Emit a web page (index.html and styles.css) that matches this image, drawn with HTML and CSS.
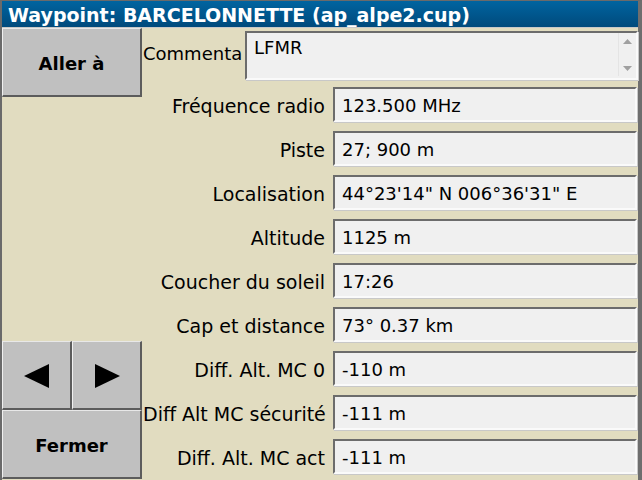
FILE: index.html
```html
<!DOCTYPE html>
<html>
<head>
<meta charset="utf-8">
<link rel="stylesheet" href="styles.css">
</head>
<body>
<div class="window">
  <div class="titlebar">Waypoint: BARCELONNETTE (ap_alpe2.cup)</div>
  <div class="content">
    <div class="left">
      <div class="btn">Aller à</div>
      <div class="bottom-btns">
        <div class="arrows">
          <div class="btn arrow"><svg width="28" height="26" viewBox="0 0 28 26"><polygon points="1,13 26,1 26,25" fill="#000"/></svg></div>
          <div class="btn arrow"><svg width="28" height="26" viewBox="0 0 28 26"><polygon points="2,1 27,13 2,25" fill="#000"/></svg></div>
        </div>
        <div class="btn">Fermer</div>
      </div>
    </div>
    <div class="form">
      <div class="comment-row">
        <div class="clabel">Commenta</div>
        <div class="field memo">
          <span class="memo-text">LFMR</span>
          <div class="scroll">
            <svg width="9" height="5" viewBox="0 0 9 5"><polygon points="4.5,0 9,5 0,5" fill="#a0a0a0"/></svg>
            <svg width="9" height="5" viewBox="0 0 9 5"><polygon points="0,0 9,0 4.5,5" fill="#a0a0a0"/></svg>
          </div>
        </div>
      </div>
      <div class="row"><div class="label">Fréquence radio</div><div class="field">123.500 MHz</div></div>
      <div class="row"><div class="label">Piste</div><div class="field">27; 900 m</div></div>
      <div class="row"><div class="label">Localisation</div><div class="field">44°23'14" N 006°36'31" E</div></div>
      <div class="row"><div class="label">Altitude</div><div class="field">1125 m</div></div>
      <div class="row"><div class="label">Coucher du soleil</div><div class="field">17:26</div></div>
      <div class="row"><div class="label">Cap et distance</div><div class="field">73° 0.37 km</div></div>
      <div class="row"><div class="label">Diff. Alt. MC 0</div><div class="field">-110 m</div></div>
      <div class="row"><div class="label">Diff Alt MC sécurité</div><div class="field">-111 m</div></div>
      <div class="row"><div class="label">Diff. Alt. MC act</div><div class="field">-111 m</div></div>
    </div>
  </div>
</div>
</body>
</html>
```
FILE: styles.css
```css
html, body {
  margin: 0;
  padding: 0;
}
body {
  width: 642px;
  height: 480px;
  overflow: hidden;
  font-family: "DejaVu Sans", sans-serif;
}
.window {
  box-sizing: border-box;
  width: 642px;
  height: 480px;
  border-top: 1px solid #6a6a6a;
  border-left: 2px solid #6a6a6a;
  border-right: 4px solid #6e6e6e;
  background: #e1dcc0;
  display: flex;
  flex-direction: column;
}
.titlebar {
  height: 27px;
  box-sizing: border-box;
  background: linear-gradient(#0064a0, #004a7c);
  color: #fff;
  font-weight: bold;
  font-size: 19px;
  line-height: 28px;
  padding-left: 6px;
  white-space: nowrap;
  border-bottom: 1px solid #c8c8c8;
}
.content {
  flex: 1;
  display: flex;
  min-height: 0;
}
.left {
  width: 140px;
  display: flex;
  flex-direction: column;
  justify-content: space-between;
  padding-bottom: 1px;
}
.btn {
  box-sizing: border-box;
  height: 69px;
  background: #c0c0c0;
  border-top: 1px solid #e8e8e8;
  border-left: 1px solid #f0f0f0;
  border-bottom: 2px solid #5c5c5c;
  border-right: 2px solid #5c5c5c;
  display: flex;
  align-items: center;
  justify-content: center;
  font-weight: bold;
  font-size: 18px;
  padding-top: 2px;
  color: #000;
}
.bottom-btns {
  display: flex;
  flex-direction: column;
}
.arrows {
  display: flex;
}
.arrow {
  width: 70px;
}
.form {
  flex: 1;
  padding: 3px 0 0 1px;
  display: flex;
  flex-direction: column;
  gap: 9px;
}
.comment-row {
  display: flex;
  align-items: flex-start;
  height: 49px;
  margin-bottom: -2px;
}
.clabel {
  width: 102px;
  overflow: hidden;
  white-space: nowrap;
  font-size: 18px;
  padding-top: 12px;
}
.row {
  display: flex;
  align-items: center;
  height: 35px;
}
.label {
  width: 182px;
  text-align: right;
  font-size: 19px;
  white-space: nowrap;
  padding-right: 8px;
  padding-top: 2px;
}
.field {
  box-sizing: border-box;
  flex: 1;
  height: 35px;
  background: #f0f0f0;
  border-top: 2px solid #6c6c6c;
  border-left: 2px solid #6c6c6c;
  border-bottom: 2px solid #fafafa;
  border-right: 2px solid #fafafa;
  box-shadow: 1px 1px 0 #c8c8c8;
  font-size: 18px;
  padding: 2px 0 0 7px;
  display: flex;
  align-items: center;
  white-space: nowrap;
  margin-right: 1px;
}
.memo {
  height: 49px;
  align-items: flex-start;
  justify-content: space-between;
  padding: 4px 0 0 7px;
  margin-right: 0;
}
.scroll {
  width: 18px;
  height: 43px;
  display: flex;
  flex-direction: column;
  justify-content: space-between;
  align-items: center;
  padding: 6px 0 5px;
  box-sizing: border-box;
  margin-top: -4px;
  border-left: 1px solid #e4e4e4;
}
```
